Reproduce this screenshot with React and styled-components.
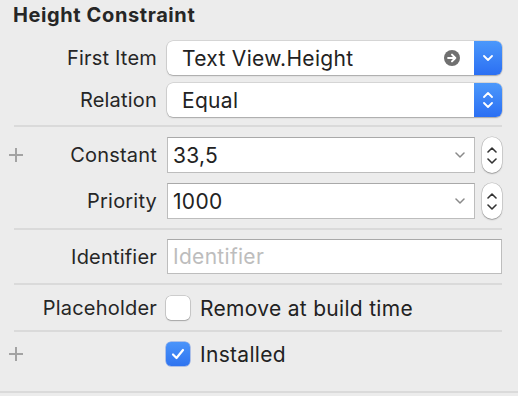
import React from 'react';
import styled, { createGlobalStyle } from 'styled-components';

const GlobalStyle = createGlobalStyle`
  html, body {
    margin: 0;
    padding: 0;
    background: #ececec;
  }
  body {
    font-family: Inter, "Liberation Sans", sans-serif;
    color: #232323;
    -webkit-font-smoothing: antialiased;
  }
`;

const Panel = styled.div`
  width: 518px;
  height: 396px;
  background: #ececec;
  display: flex;
  flex-direction: column;
  box-sizing: border-box;
`;

const Title = styled.div`
  height: 30px;
  padding: 3px 0 0 13px;
  box-sizing: border-box;
  font-size: 20px;
  font-weight: 700;
  letter-spacing: 0.6px;
  color: #262626;
  line-height: 24px;
`;

const Section = styled.div`
  display: flex;
  flex-direction: column;
  gap: ${p => p.gap || 8}px;
  padding: ${p => p.pad || '10px 0 10px'};
`;

const Divider = styled.div`
  height: 2px;
  margin: 0 16px 0 14px;
  background: #dadada;
  ${p => p.full && `margin: 0;`}
`;

const Row = styled.div`
  display: grid;
  grid-template-columns: 157px 1fr;
  column-gap: 10px;
  padding-right: 16px;
  height: ${p => p.h || 34}px;
  align-items: center;
`;

const LabelCell = styled.div`
  display: flex;
  align-items: center;
  justify-content: space-between;
  padding-left: 9px;
  height: 100%;
`;

const Label = styled.span`
  font-size: 20px;
  letter-spacing: 0.2px;
  color: #262626;
  white-space: nowrap;
`;

const Plus = styled.span`
  position: relative;
  width: 14px;
  height: 14px;
  &:before, &:after {
    content: '';
    position: absolute;
    background: #a3a3a3;
  }
  &:before {
    left: 6px;
    top: 0;
    width: 1.5px;
    height: 14px;
  }
  &:after {
    top: 6px;
    left: 0;
    height: 1.5px;
    width: 14px;
  }
`;

const Popup = styled.div`
  display: flex;
  height: 100%;
  border-radius: 6px;
  background: #fff;
  box-shadow: 0 0 0 0.5px rgba(0,0,0,0.18), 0 1px 1.5px rgba(0,0,0,0.22);
  overflow: hidden;
`;

const PopupText = styled.div`
  flex: 1;
  display: flex;
  align-items: center;
  justify-content: space-between;
  padding: 0 14px 0 15px;
  font-size: 21px;
  letter-spacing: 0.3px;
  color: #222;
`;

const BlueEnd = styled.div`
  width: 28px;
  background: linear-gradient(#4b98fb, #2b6ff3);
  display: flex;
  flex-direction: column;
  gap: 4px;
  align-items: center;
  justify-content: center;
`;

const ArrowCircle = styled.span`
  width: 16px;
  height: 16px;
  border-radius: 50%;
  background: #707070;
  display: flex;
  align-items: center;
  justify-content: center;
`;

const Controls = styled.div`
  display: flex;
  align-items: center;
  gap: 7px;
  height: 100%;
`;

const Combo = styled.div`
  flex: 1;
  height: 100%;
  box-sizing: border-box;
  background: #fff;
  border: 1px solid #bdbdbd;
  border-top-color: #a9a9a9;
  display: flex;
  align-items: center;
  justify-content: space-between;
  padding: 0 9px 0 5px;
  font-size: 21px;
  letter-spacing: 0.3px;
  color: #222;
`;

const Stepper = styled.div`
  width: 20px;
  height: 36px;
  box-sizing: border-box;
  border-radius: 10px;
  background: #fff;
  box-shadow: 0 0 0 0.5px rgba(0,0,0,0.2), 0 1px 1.5px rgba(0,0,0,0.25);
  display: flex;
  flex-direction: column;
  align-items: center;
  justify-content: center;
  gap: 5px;
`;

const Field = styled.div`
  height: 100%;
  box-sizing: border-box;
  background: #fff;
  border: 1px solid #bdbdbd;
  border-top-color: #a9a9a9;
  display: flex;
  align-items: center;
  padding: 0 5px;
  font-size: 21px;
  letter-spacing: 0.3px;
  color: ${p => (p.$placeholder ? '#bdbdbd' : '#222')};
`;

const CheckWrap = styled.label`
  display: flex;
  align-items: center;
  gap: 10px;
  margin-left: -1px;
  font-size: 21px;
  letter-spacing: 0.3px;
  color: #222;
`;

const Box = styled.span`
  width: 24px;
  height: 24px;
  box-sizing: border-box;
  border-radius: 5px;
  display: flex;
  align-items: center;
  justify-content: center;
  background: ${p => (p.checked ? 'linear-gradient(#4a94fa, #2f74f0)' : '#fff')};
  box-shadow: ${p => (p.checked
    ? '0 0 0 0.5px rgba(30,90,220,0.6)'
    : '0 0 0 0.5px rgba(0,0,0,0.25), 0 1px 1.5px rgba(0,0,0,0.2)')};
`;

const Spacer = styled.div`
  flex: 1;
`;

const Footer = styled.div`
  height: 3px;
`;

const Chevron = ({ dir = 'down', color = '#fff', w = 10, h = 6, sw = 1.8 }) => (
  <svg width={w} height={h} viewBox="0 0 10 6">
    <path
      d={dir === 'down' ? 'M1 1 L5 5 L9 1' : 'M1 5 L5 1 L9 5'}
      fill="none"
      stroke={color}
      strokeWidth={sw}
      strokeLinecap="round"
      strokeLinejoin="round"
    />
  </svg>
);

const Check = () => (
  <svg width="14" height="12" viewBox="0 0 14 12">
    <path d="M2 6.5 L5.5 10 L12 2" fill="none" stroke="#fff" strokeWidth="2.2" strokeLinecap="round" strokeLinejoin="round" />
  </svg>
);

const StepperControl = () => (
  <Stepper>
    <Chevron dir="up" color="#333" sw={1.6} />
    <Chevron dir="down" color="#333" sw={1.6} />
  </Stepper>
);

export default function App() {
  return (
    <>
      <GlobalStyle />
      <Panel>
        <Title>Height Constraint</Title>
        <Section pad="11px 0 8px">
          <Row>
            <LabelCell><span /><Label>First Item</Label></LabelCell>
            <Popup>
              <PopupText>
                Text View.Height
                <ArrowCircle>
                  <svg width="10" height="10" viewBox="0 0 9 9">
                    <path d="M1 4.5 H7.5 M4.5 1.5 L7.5 4.5 L4.5 7.5" fill="none" stroke="#fff" strokeWidth="1.8" strokeLinecap="round" strokeLinejoin="round" />
                  </svg>
                </ArrowCircle>
              </PopupText>
              <BlueEnd><Chevron /></BlueEnd>
            </Popup>
          </Row>
          <Row>
            <LabelCell><span /><Label>Relation</Label></LabelCell>
            <Popup>
              <PopupText>Equal</PopupText>
              <BlueEnd>
                <Chevron dir="up" />
                <Chevron dir="down" />
              </BlueEnd>
            </Popup>
          </Row>
        </Section>
        <Divider />
        <Section gap={11} pad="10px 0 10px">
          <Row h={35}>
            <LabelCell><Plus /><Label>Constant</Label></LabelCell>
            <Controls>
              <Combo>33,5<Chevron color="#8a8a8a" sw={1.5} /></Combo>
              <StepperControl />
            </Controls>
          </Row>
          <Row h={35}>
            <LabelCell><span /><Label>Priority</Label></LabelCell>
            <Controls>
              <Combo>1000<Chevron color="#8a8a8a" sw={1.5} /></Combo>
              <StepperControl />
            </Controls>
          </Row>
        </Section>
        <Divider />
        <Section pad="9px 0 9px">
          <Row h={35}>
            <LabelCell><span /><Label>Identifier</Label></LabelCell>
            <Field $placeholder>Identifier</Field>
          </Row>
        </Section>
        <Divider />
        <Section pad="8px 0 7px">
          <Row h={30}>
            <LabelCell><span /><Label>Placeholder</Label></LabelCell>
            <CheckWrap><Box />Remove at build time</CheckWrap>
          </Row>
        </Section>
        <Divider />
        <Section pad="7px 0 0">
          <Row h={30}>
            <LabelCell><Plus /><span /></LabelCell>
            <CheckWrap><Box checked><Check /></Box>Installed</CheckWrap>
          </Row>
        </Section>
        <Spacer />
        <Divider full />
        <Footer />
      </Panel>
    </>
  );
}
